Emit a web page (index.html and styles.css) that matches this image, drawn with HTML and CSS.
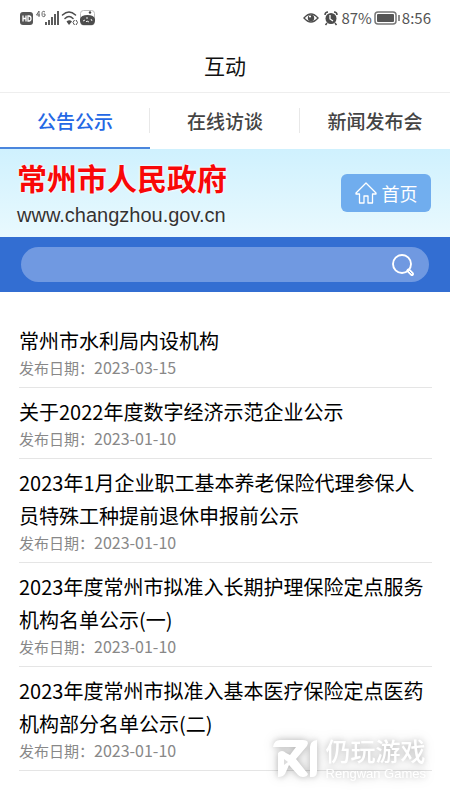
FILE: index.html
```html
<!DOCTYPE html>
<html lang="zh-CN">
<head>
<meta charset="utf-8">
<meta name="viewport" content="width=device-width, initial-scale=1">
<title>互动</title>
<link rel="stylesheet" href="styles.css">
</head>
<body>
<div class="status">
  <div class="status-group">
    <svg width="76" height="18" viewBox="0 0 76 18" aria-hidden="true">
      <rect x="0" y="3" width="13" height="13" rx="3" fill="#555"/>
      <path d="M3 6.500v6M6 6.500v6M3 9.500h3M8 7v5h1q2 0 2-2.500T9 7z" fill="none" stroke="#fff" stroke-width="1.300"/>
      <path d="M19 2l-2.500 4h3.500M19 2v6M25 3q-3-2-3 2t3 2V5h-1.500" fill="none" stroke="#666" stroke-width="1"/>
      <path d="M26 13v3M29 11v5M32 8v8M35 5v11M38 2v14" stroke="#4c4c4c" stroke-width="1.800"/>
      <g fill="none" stroke="#4c4c4c" stroke-width="1.500" stroke-linecap="round">
        <path d="M42.500 6q6.500-6 13 0M45 9.500q4-4 8 0"/>
      </g>
      <path d="M46.500 12.500q3-2.500 5.500 0L49 16z" fill="#4c4c4c"/>
      <path d="M54.500 11l-1.500 2.500 1.500 2.500M56 11l1.500 2.500L56 16" fill="none" stroke="#4c4c4c"/>
      <rect x="60.500" y="1.500" width="14" height="14.500" rx="3" fill="#fff" stroke="#bbb"/>
      <circle cx="70" cy="3.500" r="1.200" fill="#444"/>
      <path d="M60 10q1-4 7.500-4t7.500 4v2q-1 4-3 4h-9q-2 0-3-4z" fill="#4c4c4c"/>
      <path d="M63 12l2-1M67 8v2M71 10l1 2M66 13l1-1 2 1" stroke="#eee" fill="none"/>
    </svg>
  </div>
  <div class="status-group">
    <svg width="36" height="18" viewBox="0 0 36 18" aria-hidden="true">
      <path d="M1 9q7-8 14 0-7 8-14 0z" fill="none" stroke="#4c4c4c" stroke-width="1.400"/>
      <circle cx="8" cy="9" r="3.200" fill="#4c4c4c"/><circle cx="7" cy="7.500" r="1.100" fill="#fff"/>
      <circle cx="28" cy="9.500" r="5.500" fill="#4c4c4c"/>
      <path d="M22 6q0-3 3-3M31 3q3 0 3 3M24 14l-1.500 2M32 14l1.500 2" fill="none" stroke="#4c4c4c" stroke-width="1.500"/>
      <path d="M27 6v4l3 2" fill="none" stroke="#fff" stroke-width="1.300"/>
    </svg>
    <span class="battery-text">87%</span>
    <svg width="26" height="16" viewBox="0 0 26 16" aria-hidden="true">
      <rect x="1" y="2" width="21" height="12" rx="3" fill="#fff" stroke="#777" stroke-width="1.500"/>
      <rect x="3" y="4" width="17" height="8" rx="1" fill="#555"/>
      <path d="M25 5v6" stroke="#666" stroke-width="1.500"/>
    </svg>
    <span class="clock">8:56</span>
  </div>
</div>
<header class="header"><h1>互动</h1></header>
<nav class="tabs">
  <a class="tab active" href="#notice">公告公示</a>
  <a class="tab" href="#interview">在线访谈</a>
  <a class="tab" href="#press">新闻发布会</a>
</nav>
<section class="banner">
  <div class="brand">
    <div class="brand-name">常州市人民政府</div>
    <div class="brand-url">www.changzhou.gov.cn</div>
  </div>
  <a class="home" href="#home">
    <svg width="22" height="22" viewBox="0 0 22 22" fill="none" stroke="#fff" stroke-width="1.300" stroke-linejoin="round" aria-hidden="true">
      <path d="M11 1L1 11v1h3.500v9H9v-7h4v7h4.500v-9H21v-1z"/>
    </svg>
    <span>首页</span>
  </a>
</section>
<form class="search">
  <div class="search-box">
    <input type="search" aria-label="搜索">
    <button type="submit" aria-label="搜索">
      <svg width="24" height="24" viewBox="0 0 24 24" fill="none" stroke="#fff" aria-hidden="true">
        <circle cx="11" cy="11" r="9" stroke-width="1.900"/>
        <path d="M17.500 17.500l3.500 3.500" stroke-width="4" stroke-linecap="round"/>
        <path d="M18.500 18.500l2 2" stroke="#7199e0" stroke-width="1" stroke-linecap="round"/>
      </svg>
    </button>
  </div>
</form>
<main id="notice">
  <ul class="list">
    <li><a href="#n1">常州市水利局内设机构</a><p>发布日期：<time>2023-03-15</time></p></li>
    <li><a href="#n2">关于2022年度数字经济示范企业公示</a><p>发布日期：<time>2023-01-10</time></p></li>
    <li><a href="#n3">2023年1月企业职工基本养老保险代理参保人员特殊工种提前退休申报前公示</a><p>发布日期：<time>2023-01-10</time></p></li>
    <li><a href="#n4">2023年度常州市拟准入长期护理保险定点服务机构名单公示(一)</a><p>发布日期：<time>2023-01-10</time></p></li>
    <li><a href="#n5">2023年度常州市拟准入基本医疗保险定点医药机构部分名单公示(二)</a><p>发布日期：<time>2023-01-10</time></p></li>
  </ul>
</main>
<div class="watermark">
  <svg width="46" height="40" viewBox="0 0 46 40" aria-hidden="true">
    <path d="M0 9Q1 2 7 2h23q7 0 4 6L23 21l12 15q-1 3-5 3-3 0-5-2l-9-10-4 9q-2 3-7 3V15q4-4 8 0l4 2 6-8z" fill="#fff"/>
    <path d="M44 2v31q0 6-5 6h-2V9q0-6 7-7z" fill="#fff"/>
    <path d="M11 21v6l4-3z" fill="#ddd"/>
  </svg>
  <div>
    <div class="wm-name">仍玩游戏</div>
    <div class="wm-sub">Rengwan Games</div>
  </div>
</div>
</body>
</html>
```
FILE: styles.css
```css
* { box-sizing: border-box; }

body {
  margin: 0;
  position: relative;
  min-height: 100vh;
  background: #fff;
  color: #111;
  font-family: "Noto Sans CJK SC", sans-serif;
}

a { color: inherit; text-decoration: none; }

.status {
  display: flex;
  justify-content: space-between;
  align-items: center;
  height: 36px;
  padding: 0 19px 0 20px;
  color: #555;
}
.status-group { display: flex; align-items: center; gap: 2px; }
.status svg { display: block; }
.battery-text, .clock { font-size: 15px; line-height: 20px; }

.header {
  height: 57px;
  border-bottom: 1px solid #eee;
  text-align: center;
}
.header h1 {
  margin: 0;
  font-size: 21px;
  line-height: 58px;
  font-weight: 400;
}

.tabs { display: grid; grid-template-columns: repeat(3, 1fr); }
.tab {
  display: flex;
  align-items: center;
  justify-content: center;
  height: 56px;
  border-bottom: 2px solid transparent;
  background: linear-gradient(#e8e8e8, #e8e8e8) right center / 1px 25px no-repeat;
  color: #444;
  font-size: 19px;
  font-weight: 500;
}
.tab:last-child { background: none; }
.tab.active { color: #2468e5; border-bottom-color: #4a86dd; }

.banner {
  display: flex;
  justify-content: space-between;
  align-items: center;
  height: 88px;
  padding: 0 19px 0 17px;
  background: linear-gradient(#cff1fe, #e9f9fe);
}
.brand-name {
  color: #f80808;
  font-size: 30px;
  line-height: 36px;
  font-weight: 700;
  text-shadow: 0 0 2px #fff, 0 0 3px #fff;
}
.brand-url {
  padding-top: 8px;
  color: #333;
  font-family: "Liberation Sans", sans-serif;
  font-size: 20px;
  line-height: 24px;
  text-shadow: 0 0 2px #fff;
}
.home {
  display: flex;
  align-items: center;
  justify-content: center;
  gap: 5px;
  width: 90px;
  height: 38px;
  border-radius: 6px;
  background: #70adee;
  color: #fff;
  font-size: 18px;
}

.search { padding: 10px 21px; background: #336ed2; }
.search-box {
  display: flex;
  align-items: center;
  height: 35px;
  padding: 0 14px 0 16px;
  border-radius: 18px;
  background: #7099e1;
}
.search input {
  flex: 1;
  min-width: 0;
  padding: 0;
  border: 0;
  outline: 0;
  background: none;
  color: #fff;
  font: inherit;
}
.search button { display: flex; padding: 0; border: 0; background: none; }

.list { margin: 0; padding: 25px 18px 0 19px; list-style: none; }
.list li { padding: 7px 0 8px; border-bottom: 1px solid #e5e5e5; }
.list a { display: block; font-size: 20px; line-height: 33px; color: #000; }
.list p { margin: 0; font-size: 15px; line-height: 22px; color: #888; }
.list time { font-size: 16px; line-height: 1; }

.watermark {
  position: absolute;
  right: 24px;
  bottom: 20px;
  display: flex;
  align-items: center;
  gap: 7px;
  color: #fff;
  filter: drop-shadow(0 0 3px rgba(0, 0, 0, 0.2)) drop-shadow(0 0 6px rgba(0, 0, 0, 0.15));
}
.wm-name { font-size: 25px; line-height: 32px; font-weight: 500; }
.wm-sub { font-family: "Liberation Sans", sans-serif; font-size: 13px; line-height: 15px; }
```
